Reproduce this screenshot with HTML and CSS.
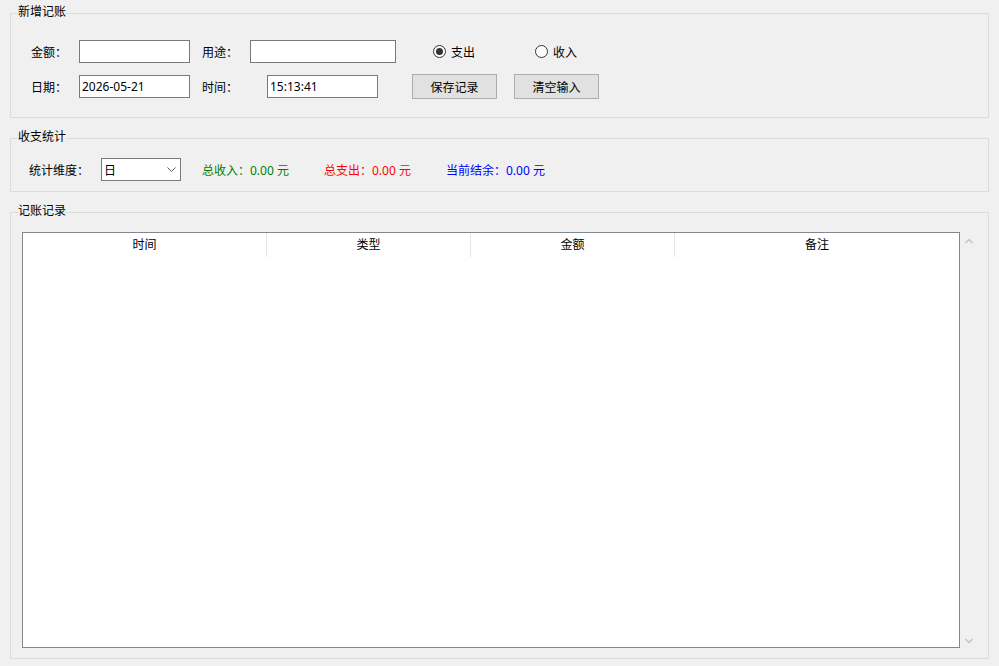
FILE: index.html
```html
<!DOCTYPE html>
<html lang="zh-CN">
<head>
<meta charset="utf-8">
<title>记账</title>
<link rel="stylesheet" href="styles.css">
</head>
<body>
<fieldset class="group group-add">
  <legend>新增记账</legend>
  <div class="row row1">
    <span class="lbl w48">金额：</span>
    <input class="txt w111" type="text" value="">
    <span class="lbl w48 ml12">用途：</span>
    <input class="txt w146" type="text" value="">
    <label class="radio r-out"><span class="circle checked"></span><span>支出</span></label>
    <label class="radio"><span class="circle"></span><span>收入</span></label>
  </div>
  <div class="row row2">
    <span class="lbl w48">日期：</span>
    <input class="txt w111" type="text" value="2026-05-21">
    <span class="lbl w65 ml12">时间：</span>
    <input class="txt w111" type="text" value="15:13:41">
    <button class="btn b-save">保存记录</button>
    <button class="btn b-clear">清空输入</button>
  </div>
</fieldset>

<fieldset class="group group-stat">
  <legend>收支统计</legend>
  <div class="row stat-row">
    <span class="lbl w72">统计维度：</span>
    <div class="combo">
      <span class="combo-val">日</span>
      <svg class="combo-arrow" width="9" height="5" viewBox="0 0 9 5"><path d="M0.5 0.5 L4.5 4.5 L8.5 0.5" fill="none" stroke="#555" stroke-width="1"/></svg>
    </div>
    <span class="stat income">总收入：0.00 元</span>
    <span class="stat expense">总支出：0.00 元</span>
    <span class="stat balance">当前结余：0.00 元</span>
  </div>
</fieldset>

<fieldset class="group group-list">
  <legend>记账记录</legend>
  <div class="list-wrap">
    <div class="grid">
      <div class="grid-head">
        <div class="hcell c1">时间</div>
        <div class="hcell c2">类型</div>
        <div class="hcell c3">金额</div>
        <div class="hcell c4">备注</div>
      </div>
    </div>
    <div class="vscroll">
      <svg width="8" height="6" viewBox="0 0 8 6"><path d="M0.5 5 L4 1.5 L7.5 5" fill="none" stroke="#c2c2c2" stroke-width="1.5"/></svg>
      <svg width="8" height="6" viewBox="0 0 8 6"><path d="M0.5 1 L4 4.5 L7.5 1" fill="none" stroke="#c2c2c2" stroke-width="1.5"/></svg>
    </div>
  </div>
</fieldset>
<div class="frame-bottom"></div>
</body>
</html>
```

FILE: styles.css
```css
html, body {
  margin: 0;
}
body {
  background: #f0f0f0;
  padding: 3px 10px 0 10px;
  height: 666px;
  box-sizing: border-box;
  overflow: hidden;
  font-family: "Noto Sans", "Noto Sans CJK SC", sans-serif;
  font-size: 12px;
  color: #000;
}
.group {
  margin: 0 0 10px 0;
  padding: 0;
  border: 1px solid #dcdcdc;
  min-width: 0;
}
.group legend {
  margin-left: 7px;
  padding: 0 0 4px 0;
  line-height: 16px;
  font-family: "Noto Sans CJK SC", sans-serif;
  font-size: 12px;
}
.group-add {
  padding: 17px 0 18px 0;
}
.group-add .row {
  margin-left: 20px;
}
.row {
  display: flex;
  align-items: center;
}
.row1 {
  height: 23px;
}
.row2 {
  height: 25px;
  margin-top: 11px;
}
.lbl {
  font-family: "Noto Sans CJK SC", sans-serif;
  line-height: 16px;
  flex: none;
}
.w48 { width: 48px; }
.w65 { width: 65px; }
.w72 { width: 72px; }
.ml12 { margin-left: 12px; }
.txt {
  box-sizing: border-box;
  height: 23px;
  border: 1px solid #7a7a7a;
  background: #fff;
  padding: 0 2px;
  margin: 0;
  font-family: "Noto Sans", "Noto Sans CJK SC", sans-serif;
  font-size: 12px;
  color: #000;
  outline: none;
  flex: none;
}
.w111 { width: 111px; }
.w146 { width: 146px; }
.radio {
  display: flex;
  align-items: center;
  gap: 5px;
  font-family: "Noto Sans CJK SC", sans-serif;
  flex: none;
}
.r-out {
  margin-left: 37px;
  width: 102px;
}
.circle {
  width: 13px;
  height: 13px;
  box-sizing: border-box;
  border: 1px solid #333;
  border-radius: 50%;
  background: #fff;
  display: flex;
  align-items: center;
  justify-content: center;
}
.circle.checked::after {
  content: "";
  width: 7px;
  height: 7px;
  border-radius: 50%;
  background: #333;
}
.btn {
  box-sizing: border-box;
  width: 85px;
  height: 25px;
  border: 1px solid #adadad;
  background: #e1e1e1;
  margin: 0;
  padding: 0;
  font-family: "Noto Sans CJK SC", sans-serif;
  font-size: 12px;
  color: #000;
  flex: none;
}
.b-save { margin-left: 34px; }
.b-clear { margin-left: 17px; }

.group-stat {
  padding: 10px 0 10px 0;
}
.stat-row {
  height: 23px;
  margin-left: 18px;
}
.combo {
  box-sizing: border-box;
  width: 80px;
  height: 23px;
  border: 1px solid #7a7a7a;
  background: #fff;
  display: flex;
  align-items: center;
  justify-content: space-between;
  padding: 0 4px 0 2px;
  flex: none;
}
.combo-val {
  font-family: "Noto Sans CJK SC", sans-serif;
}
.combo-arrow {
  display: block;
}
.stat {
  font-family: "Noto Sans", "Noto Sans CJK SC", sans-serif;
  flex: none;
}
.income {
  margin-left: 21px;
  width: 122px;
  color: #008000;
}
.expense {
  width: 122px;
  color: #ff0000;
}
.balance {
  color: #0000ff;
}

.group-list {
  padding: 10px 0 10px 0;
}
.list-wrap {
  display: flex;
  height: 416px;
  margin-left: 11px;
}
.grid {
  box-sizing: border-box;
  width: 938px;
  height: 416px;
  border: 1px solid #828790;
  background: #fff;
  flex: none;
}
.grid-head {
  display: flex;
  height: 24px;
}
.hcell {
  box-sizing: border-box;
  height: 24px;
  line-height: 22px;
  text-align: center;
  font-family: "Noto Sans CJK SC", sans-serif;
  border-right: 1px solid #e5e5e5;
}
.c1 { width: 244px; }
.c2 { width: 204px; }
.c3 { width: 204px; }
.c4 { width: 284px; border-right: none; }
.vscroll {
  flex: 1;
  display: flex;
  flex-direction: column;
  justify-content: space-between;
  padding: 6px 0 4px 5px;
}
.vscroll svg {
  display: block;
}
.frame-bottom {
  margin: 5px -10px 0 -10px;
  height: 2px;
  background: #5a5a5a;
}
```
